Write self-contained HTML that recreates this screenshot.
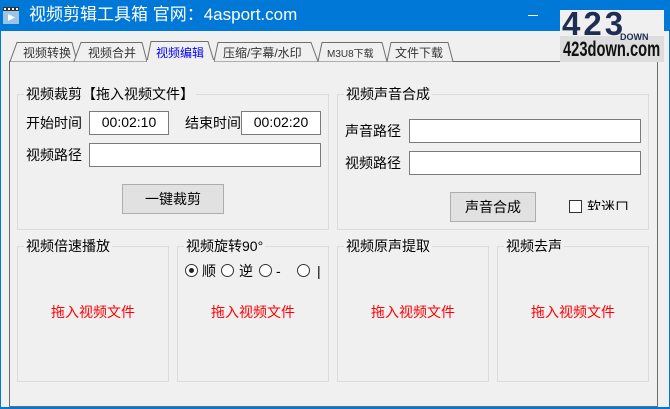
<!DOCTYPE html>
<html><head><meta charset="utf-8"><style>
*{margin:0;padding:0;box-sizing:border-box}
body{width:670px;height:409px;background:#f0f0f0;position:relative;overflow:hidden;font-family:"Liberation Sans","Noto Sans CJK SC",sans-serif;font-size:14px;color:#000}
.a{position:absolute}
.tb{left:0;top:0;width:670px;height:31px;background:#0078d7}
.g{position:absolute;border:1px solid #dcdcdc}
.gl{position:absolute;background:#f0f0f0;padding:0 2px;font-size:14px;line-height:16px;top:-9px;left:6px;white-space:nowrap}
.in{position:absolute;background:#fff;border:1px solid #7a7a7a;font-size:14px;line-height:21px;text-align:center}
.bt{position:absolute;background:#e1e1e1;border:1px solid #adadad;text-align:center;font-size:14px}
.lb{position:absolute;font-size:14px;line-height:16px;white-space:nowrap}
.red{position:absolute;color:#f00;font-size:14px;width:100%;text-align:center;top:55px}
.r{position:absolute;width:13px;height:13px;border:1px solid #333;border-radius:50%;background:#fff}
</style></head><body>
<div class="a tb"></div>
<div class="a" style="left:0;top:31px;width:1px;height:378px;background:#0078d7"></div>
<div class="a" style="left:669px;top:31px;width:1px;height:378px;background:#0078d7"></div>
<div class="a" style="left:0;top:407px;width:670px;height:2px;background:#0078d7"></div>
<svg class="a" style="left:3px;top:7px" width="16" height="18"><rect x="0" y="0" width="16" height="4" fill="#333"/><rect x="1" y="1" width="2" height="2" fill="#fff"/><rect x="5" y="1" width="2" height="2" fill="#fff"/><rect x="9" y="1" width="2" height="2" fill="#fff"/><rect x="13" y="1" width="2" height="2" fill="#fff"/><rect x="0" y="4" width="16" height="13" fill="#9cc4e8"/><path d="M5 7 L12 10.5 L5 14Z" fill="#fff"/></svg>
<div class="a" style="left:29px;top:5px;color:#fff;font-size:17px;line-height:20px">视频剪辑工具箱 官网：4asport.com</div>
<div class="a" style="left:528px;top:15px;width:10px;height:1px;background:#fff"></div>
<div class="a" style="left:578px;top:10px;width:9px;height:9px;border:1px solid #9cc"></div>
<div class="a" style="left:636px;top:6px;color:#fff;font-size:16px">✕</div>
<!-- panel -->
<div class="a" style="left:9px;top:61px;width:649px;height:346px;border:1px solid #6e6e6e"></div>
<svg class="a" style="left:0;top:40px" width="470" height="23" font-family="Liberation Sans,Noto Sans CJK SC,sans-serif" font-size="12">
<g fill="#f0f0f0" stroke="#6e6e6e">
<path d="M10 21.5 L17 2.5 L72 2.5 L77 21.5"/>
<path d="M74 21.5 L81 2.5 L142 2.5 L147 21.5"/>
<path d="M214 21.5 L218 2.5 L311 2.5 L318 21.5"/>
<path d="M318 21.5 L322 2.5 L382 2.5 L387 21.5"/>
<path d="M387 21.5 L391 2.5 L448 2.5 L453 21.5"/>
<path d="M147 21.5 L151 1.5 L208 1.5 L214 21.5" stroke-linejoin="miter"/>
</g>
<rect x="147" y="20" width="67" height="3" fill="#f0f0f0"/>
<text x="23" y="17" fill="#333">视频转换</text>
<text x="88" y="17" fill="#333">视频合并</text>
<text x="156" y="17" fill="#00f">视频编辑</text>
<text x="223" y="17" fill="#333">压缩/字幕/水印</text>
<text x="327" y="17" fill="#333" font-size="10">M3U8下载</text>
<text x="395" y="17" fill="#333">文件下载</text>
</svg>
<!-- watermark -->
<div class="a" style="left:560px;top:10px;width:104px;height:52px;background:linear-gradient(#f0f0f0 0 50%,#ddd 50%)"></div>
<div class="a" style="left:562px;top:8px;color:#1f2d52;font-size:33px;font-weight:bold;line-height:32px;letter-spacing:3px">423</div>
<div class="a" style="left:620px;top:32px;color:#1f2d52;font-size:9px;font-weight:bold">DOWN</div>
<div class="a" style="left:563px;top:38px;color:#111;font-size:21px;font-weight:bold;line-height:24px;transform:scaleX(0.7);transform-origin:left">423down.com</div>
<!-- group 1 -->
<div class="g" style="left:17px;top:94px;width:312px;height:136px"><div class="gl">视频裁剪【拖入视频文件】</div></div>
<div class="lb" style="left:26px;top:115px">开始时间</div>
<div class="in" style="left:89px;top:111px;width:80px;height:24px">00:02:10</div>
<div class="lb" style="left:185px;top:115px">结束时间</div>
<div class="in" style="left:241px;top:111px;width:80px;height:24px">00:02:20</div>
<div class="lb" style="left:26px;top:147px">视频路径</div>
<div class="in" style="left:89px;top:143px;width:232px;height:24px"></div>
<div class="bt" style="left:122px;top:184px;width:102px;height:30px;line-height:28px">一键裁剪</div>
<!-- group 2 -->
<div class="g" style="left:337px;top:94px;width:312px;height:136px"><div class="gl">视频声音合成</div></div>
<div class="lb" style="left:345px;top:123px">声音路径</div>
<div class="in" style="left:409px;top:119px;width:232px;height:24px"></div>
<div class="lb" style="left:345px;top:155px">视频路径</div>
<div class="in" style="left:409px;top:151px;width:232px;height:24px"></div>
<div class="bt" style="left:450px;top:192px;width:86px;height:30px;line-height:28px">声音合成</div>
<div class="a" style="left:569px;top:200px;width:13px;height:13px;border:1px solid #333;background:#fff"></div>
<div class="a" style="left:587px;top:196px;width:42px;height:14px;overflow:hidden;font-size:14px;line-height:22px">软迷口</div>
<!-- bottom groups -->
<div class="g" style="left:17px;top:246px;width:152px;height:136px"><div class="gl">视频倍速播放</div><div class="red">拖入视频文件</div></div>
<div class="g" style="left:177px;top:246px;width:152px;height:136px"><div class="gl">视频旋转90°</div><div class="red">拖入视频文件</div></div>
<div class="r" style="left:185px;top:264px"><span class="a" style="left:3px;top:3px;width:5px;height:5px;border-radius:50%;background:#222"></span></div>
<div class="lb" style="left:202px;top:263px">顺</div>
<div class="r" style="left:221px;top:264px"></div>
<div class="lb" style="left:239px;top:263px">逆</div>
<div class="r" style="left:259px;top:264px"></div>
<div class="lb" style="left:276px;top:263px">-</div>
<div class="r" style="left:297px;top:264px"></div>
<div class="lb" style="left:317px;top:263px">|</div>
<div class="g" style="left:337px;top:246px;width:152px;height:136px"><div class="gl">视频原声提取</div><div class="red">拖入视频文件</div></div>
<div class="g" style="left:497px;top:246px;width:152px;height:136px"><div class="gl">视频去声</div><div class="red">拖入视频文件</div></div>
</body></html>
